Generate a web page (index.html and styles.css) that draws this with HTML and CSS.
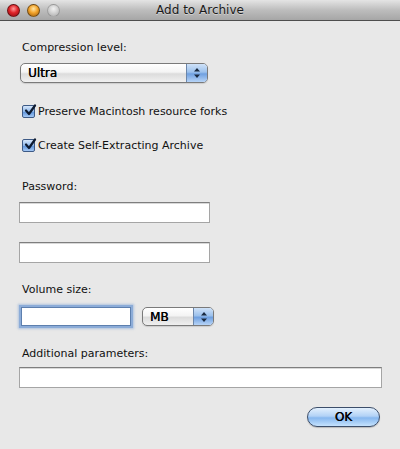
FILE: index.html
```html
<!DOCTYPE html>
<html>
<head>
<meta charset="utf-8">
<link rel="stylesheet" href="styles.css">
</head>
<body>
<div class="window">
  <div class="titlebar">
    <div class="lights">
      <span class="light red"></span>
      <span class="light amber"></span>
      <span class="light gray"></span>
    </div>
    <div class="title">Add to Archive</div>
    <div class="spacer"></div>
  </div>
  <div class="content">
    <div class="label l-comp">Compression level:</div>
    <div class="popup wide">
      <span class="popup-text">Ultra</span>
      <span class="stepper"><svg width="8" height="12" viewBox="0 0 8 12"><path d="M4 1 L7 4.5 L1 4.5 Z M4 11 L7 7.5 L1 7.5 Z" fill="#1a2a40"/></svg></span>
    </div>
    <div class="check c1">
      <span class="box"><svg width="14" height="14" viewBox="0 0 14 14"><path d="M3 6.5 L6 10 L12 1.5" fill="none" stroke="#0d1a30" stroke-width="2.2" stroke-linecap="round" stroke-linejoin="round"/></svg></span>
      <span>Preserve Macintosh resource forks</span>
    </div>
    <div class="check c2">
      <span class="box"><svg width="14" height="14" viewBox="0 0 14 14"><path d="M3 6.5 L6 10 L12 1.5" fill="none" stroke="#0d1a30" stroke-width="2.2" stroke-linecap="round" stroke-linejoin="round"/></svg></span>
      <span>Create Self-Extracting Archive</span>
    </div>
    <div class="label l-pass">Password:</div>
    <div class="field f-pass1"></div>
    <div class="field f-pass2"></div>
    <div class="label l-vol">Volume size:</div>
    <div class="vol-row">
      <div class="field focus"></div>
      <div class="popup small">
        <span class="popup-text">MB</span>
        <span class="stepper"><svg width="8" height="12" viewBox="0 0 8 12"><path d="M4 1 L7 4.5 L1 4.5 Z M4 11 L7 7.5 L1 7.5 Z" fill="#1a2a40"/></svg></span>
      </div>
    </div>
    <div class="label l-add">Additional parameters:</div>
    <div class="field f-add"></div>
    <div class="btn-row">
      <div class="ok">OK</div>
    </div>
  </div>
</div>
</body>
</html>
```
FILE: styles.css
```css
html, body {
  margin: 0;
  padding: 0;
}
body {
  font-family: "DejaVu Sans", "Liberation Sans", sans-serif;
  font-size: 11px;
  color: #111;
}
.window {
  width: 400px;
  height: 449px;
  background: #e8e8e8;
  overflow: hidden;
}
.titlebar {
  height: 20px;
  border-bottom: 1px solid #4e4e4e;
  background: linear-gradient(#e4e4e4, #bdbdbd 50%, #a6a6a6);
  display: grid;
  grid-template-columns: 1fr auto 1fr;
  align-items: center;
}
.lights {
  display: flex;
  gap: 7px;
  padding-left: 7px;
}
.light {
  width: 13px;
  height: 13px;
  border-radius: 50%;
  box-sizing: border-box;
  border: 1px solid rgba(0,0,0,0.45);
}
.light.red {
  background: radial-gradient(circle at 50% 35%, #ff9c9c 0, #e0252a 45%, #8b0b10 100%);
}
.light.amber {
  background: radial-gradient(circle at 50% 35%, #ffe7a8 0, #f3a42b 45%, #9a5a08 100%);
}
.light.gray {
  border-color: rgba(0,0,0,0.2);
  background: radial-gradient(circle at 50% 35%, #f2f2f2 0, #cfcfcf 50%, #a9a9a9 100%);
}
.title {
  font-size: 12px;
  color: #1a1a1a;
  text-shadow: 0 1px 0 rgba(255,255,255,0.4);
}
.content {
  padding: 0 18px 0 19px;
}
.label {
  height: 14px;
  line-height: 14px;
  padding-left: 3px;
}
.l-comp { margin-top: 20px; }
.l-pass { margin-top: 28px; }
.l-vol { margin-top: 20px; }
.l-add { margin-top: 21px; }

.popup {
  height: 20px;
  box-sizing: border-box;
  border: 1px solid #7a7a7a;
  border-radius: 5px;
  background: linear-gradient(#ffffff, #f4f4f4 45%, #dcdcdc 55%, #f0f0f0);
  display: flex;
  align-items: center;
  overflow: hidden;
  box-shadow: 0 1px 1px rgba(0,0,0,0.12);
}
.popup.wide {
  margin-top: 8px;
  margin-left: 1px;
  width: 188px;
}
.popup.small {
  width: 72px;
  height: 19px;
  margin-top: 1px;
}
.popup-text {
  flex: 1;
  padding-left: 7px;
  font-size: 12px;
  color: #000;
  text-shadow: 0.3px 0 0 #000;
}
.small .popup-text { padding-left: 7px; }
.stepper {
  width: 20px;
  height: 100%;
  border-left: 1px solid #6b86aa;
  background: linear-gradient(#cfe2f8, #9cc1ec 45%, #6fa0e0 55%, #b7d4f7);
  display: flex;
  align-items: center;
  justify-content: center;
}
.small .stepper { width: 19px; }

.check {
  display: flex;
  align-items: center;
  gap: 3px;
  height: 14px;
  padding-left: 3px;
}
.c1 { margin-top: 21px; }
.c2 { margin-top: 20px; }
.box {
  width: 13px;
  height: 13px;
  box-sizing: border-box;
  border: 1px solid #3d5a86;
  border-radius: 2px;
  background: linear-gradient(#d6e7fb, #8fb8ea 50%, #5f95db 55%, #a5c9f5);
  position: relative;
  display: block;
}
.box svg {
  position: absolute;
  left: 0;
  top: -2px;
}

.field {
  height: 21px;
  box-sizing: border-box;
  background: #fff;
  border: 1px solid #a5a5a5;
  border-top-color: #7e7e7e;
  box-shadow: inset 0 1px 0 #d8d8d8;
}
.f-pass1 { margin-top: 8px; width: 191px; }
.f-pass2 { margin-top: 19px; width: 191px; }
.f-add { margin-top: 6px; width: 363px; }

.vol-row {
  display: flex;
  align-items: center;
  gap: 11px;
  margin-top: 9px;
  padding-left: 2px;
}
.field.focus {
  width: 110px;
  height: 19px;
  border: 1px solid #5d7fae;
  box-shadow: 0 0 0 2px #8cacd8, 0 0 2px 3px rgba(130,165,215,0.55);
}

.btn-row {
  display: flex;
  justify-content: flex-end;
  margin-top: 19px;
  padding-right: 2px;
}
.ok {
  width: 73px;
  height: 20px;
  box-sizing: border-box;
  border: 1px solid #3c4e6a;
  border-radius: 10px;
  background: linear-gradient(#e3f0fd, #b2d2f6 45%, #86b7ef 55%, #c5e2fd);
  font-size: 12px;
  line-height: 18px;
  text-align: center;
  color: #000;
  text-shadow: 0.3px 0 0 #000;
  box-shadow: 0 1px 1px rgba(0,0,0,0.2);
}
```
